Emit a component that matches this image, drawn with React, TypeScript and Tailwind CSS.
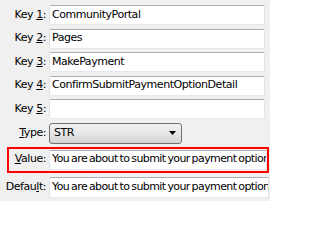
import React from "react";

const font = { fontFamily: '"DejaVu Sans", "Liberation Sans", sans-serif' };

function Label({ pre, key1, post }: { pre: string; key1: string; post: string }) {
  return (
    <span className="w-[46px] shrink-0 text-right whitespace-nowrap">
      {pre}
      <span className="underline">{key1}</span>
      {post}
    </span>
  );
}

const box =
  "ml-[3px] flex items-center overflow-hidden whitespace-nowrap rounded-[2px] border border-[#e2e3ea] border-t-[#abadb3] border-b-[#e3e9ef] bg-white pl-[2px]";

export default function App() {
  const keys = ["CommunityPortal", "Pages", "MakePayment", "ConfirmSubmitPaymentOptionDetail", ""];
  const msg = "You are about to submit your payment option";

  return (
    <div
      className="flex h-[201px] w-[270px] flex-col overflow-hidden bg-[#f0f0f0] pt-[5px] text-[11px] tracking-[-0.45px] text-black"
      style={font}
    >
      {keys.map((k, i) => (
        <div key={i} className="mb-[3.5px] flex h-[20px] items-center">
          <Label pre="Key " key1={String(i + 1)} post=":" />
          <div className={`${box} h-[20px] w-[216px]`}>{k}</div>
        </div>
      ))}

      {/* Type combo */}
      <div className="flex h-[21px] items-center">
        <Label pre="" key1="T" post="ype:" />
        <div className="ml-[3px] flex h-[21px] w-[133px] items-center justify-between rounded-[3px] border border-[#707070] bg-gradient-to-b from-[#f2f2f2] via-[#e6e6e6] to-[#d4d4d4] pl-[4px] pr-[5px]">
          <span>STR</span>
          <svg width="7" height="4" viewBox="0 0 7 4">
            <path d="M0 0h7L3.5 4z" fill="#000" />
          </svg>
        </div>
      </div>

      {/* Value, highlighted */}
      <div className="ml-[7px] mt-[3px] flex h-[26px] w-[262px] items-center border-2 border-[#ff0000]">
        <span className="w-[37px] shrink-0 text-right">
          <span className="underline">V</span>alue:
        </span>
        <div className={`${box} h-[20px] w-[218px] tracking-[-0.6px] [word-spacing:-1px]`}>{msg}</div>
      </div>

      <div className="mt-[4px] flex h-[21px] items-center">
        <Label pre="Defau" key1="l" post="t:" />
        <div className={`${box} h-[21px] w-[220px] tracking-[-0.6px] [word-spacing:-1px]`}>{msg}</div>
      </div>
    </div>
  );
}
